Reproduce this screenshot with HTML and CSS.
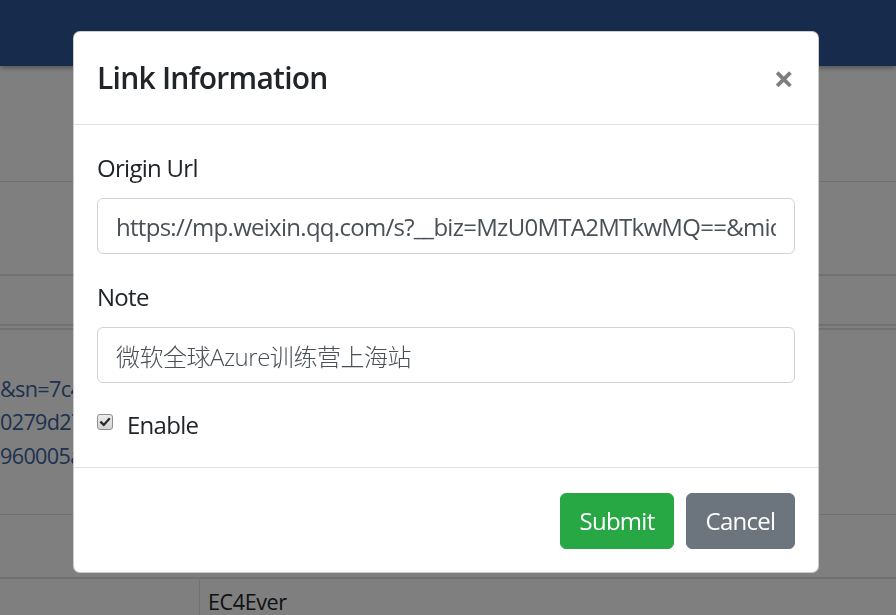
FILE: index.html
```html
<!DOCTYPE html>
<html lang="en">
<head>
<meta charset="utf-8">
<title>Link Information</title>
<link rel="stylesheet" href="styles.css">
</head>
<body>
<header class="navbar"></header>
<main class="page">
  <div class="row row-a"></div>
  <div class="row row-b"></div>
  <div class="row row-c"></div>
  <div class="row row-d">
    <div class="url-cell">
      <a class="link">&amp;sn=7c4b9e1a</a>
      <a class="link">0279d27f6c3a</a>
      <a class="link">960005a8e2d1</a>
    </div>
  </div>
  <div class="row row-e"></div>
  <div class="row row-f">
    <div class="cell cell-first"></div>
    <div class="cell cell-name">EC4Ever</div>
  </div>
</main>

<div class="backdrop"></div>

<div class="modal-wrap">
  <div class="modal" role="dialog">
    <div class="modal-header">
      <h5 class="modal-title">Link Information</h5>
      <button class="close" type="button" aria-label="Close">&times;</button>
    </div>
    <div class="modal-body">
      <div class="form-group group-url">
        <label class="form-label">Origin Url</label>
        <input class="form-control" type="text" value="https://mp.weixin.qq.com/s?__biz=MzU0MTA2MTkwMQ==&amp;mid=2247484020&amp;idx=1&amp;sn=7c4b9e1a0279d27f6c3a960005a8e2d1">
      </div>
      <div class="form-group group-note">
        <label class="form-label">Note</label>
        <input class="form-control note-input" type="text" value="微软全球Azure训练营上海站">
      </div>
      <div class="form-check">
        <span class="check-box" aria-hidden="true">
          <svg viewBox="0 0 16 16" width="14" height="14">
            <path d="M3.6 8.4 L6.6 11.3 L12.6 4.6" fill="none" stroke="#2b2b2b" stroke-width="2.6" stroke-linecap="square" stroke-linejoin="miter"/>
          </svg>
        </span>
        <span class="check-label">Enable</span>
      </div>
    </div>
    <div class="modal-footer">
      <button class="btn btn-success" type="button">Submit</button>
      <button class="btn btn-secondary" type="button">Cancel</button>
    </div>
  </div>
</div>
</body>
</html>
```

FILE: styles.css
```css
* {
  box-sizing: border-box;
}

html, body {
  margin: 0;
  padding: 0;
  height: 100%;
  overflow: hidden;
}

body {
  font-family: "Open Sans", "Noto Sans CJK SC", sans-serif;
  font-size: 24px;
  line-height: 36px;
  color: #212529;
  background: #ffffff;
  letter-spacing: -0.03em;
}

/* ---------- page underneath ---------- */
.navbar {
  height: 66px;
  background: #2f5699;
  box-shadow: 0 2px 5px rgba(0, 0, 0, 0.35);
  position: relative;
  z-index: 1;
}

.page {
  display: flex;
  flex-direction: column;
}

.row {
  width: 100%;
}

.row-a {
  height: 116px;
  border-bottom: 1px solid #dee2e6;
}

.row-b {
  height: 94px;
  border-bottom: 2px solid #dee2e6;
}

.row-c {
  height: 50px;
  border-bottom: 2px solid #dee2e6;
}

.row-d {
  margin-top: 2px;
  height: 187px;
  border-top: 2px solid #dee2e6;
  border-bottom: 1px solid #dee2e6;
  display: flex;
  align-items: center;
}

.url-cell {
  display: flex;
  flex-direction: column;
  font-size: 21.6px;
  line-height: 33.5px;
  letter-spacing: -0.03em;
}

.link {
  color: #3a64a0;
  text-decoration: none;
}

.row-e {
  height: 64px;
  border-bottom: 2px solid #dee2e6;
}

.row-f {
  display: flex;
  height: 60px;
}

.cell {
  font-size: 21.6px;
  line-height: 32px;
  letter-spacing: -0.02em;
}

.cell-first {
  width: 200px;
  border-right: 1px solid #dee2e6;
}

.cell-name {
  padding: 7px 0 0 8px;
  color: #212529;
}

/* ---------- overlay ---------- */
.backdrop {
  position: fixed;
  inset: 0;
  background: rgba(0, 0, 0, 0.5);
  z-index: 10;
}

.modal-wrap {
  position: fixed;
  inset: 0;
  z-index: 20;
  padding: 31px 0 0 73px;
}

.modal {
  width: 746px;
  background: #ffffff;
  border: 1px solid rgba(0, 0, 0, 0.2);
  border-radius: 7px;
  display: flex;
  flex-direction: column;
}

.modal-header {
  display: flex;
  align-items: flex-start;
  justify-content: space-between;
  padding: 28px 23px 27px 23px;
  border-bottom: 1px solid #dee2e6;
}

.modal-title {
  margin: 0;
  font-size: 30px;
  line-height: 36px;
  font-weight: 600;
  letter-spacing: -0.025em;
}

.close {
  border: 0;
  background: transparent;
  padding: 0 1px 0 0;
  margin: 1px 0 0 0;
  font-family: "Open Sans", sans-serif;
  font-size: 36px;
  font-weight: 700;
  line-height: 36px;
  color: #000;
  opacity: 0.5;
  text-shadow: 0 1px 0 #fff;
  letter-spacing: 0;
  cursor: pointer;
}

.modal-body {
  padding: 25px 23px 24px 23px;
}

.form-group {
  display: flex;
  flex-direction: column;
}

.group-url {
  margin-bottom: 25px;
}

.group-note {
  margin-bottom: 24px;
}

.form-label {
  margin-bottom: 12px;
}

.form-control {
  width: 698px;
  height: 56px;
  padding: 9px 18px;
  font-family: "Open Sans", "Noto Sans CJK SC", sans-serif;
  font-size: 24px;
  line-height: 36px;
  color: #495057;
  background: #fff;
  border: 1px solid #ced4da;
  border-radius: 6px;
  letter-spacing: -0.03em;
  outline: none;
}

.note-input {
  font-weight: 300;
  letter-spacing: -0.02em;
}

.form-check {
  display: flex;
  align-items: flex-start;
  gap: 14px;
  height: 36px;
}

.check-box {
  flex: none;
  width: 16px;
  height: 16px;
  margin-top: 7px;
  border: 1px solid #8f8f8f;
  border-radius: 3px;
  background: linear-gradient(#ececec, #d3d3d3);
  display: flex;
  align-items: center;
  justify-content: center;
}

.check-box svg {
  display: block;
}

.check-label {
  line-height: 36px;
}

.modal-footer {
  display: flex;
  justify-content: flex-end;
  align-items: center;
  gap: 12px;
  padding: 25px 23px 23px;
  border-top: 1px solid #dee2e6;
}

.btn {
  height: 56px;
  padding: 0;
  border: 1px solid transparent;
  border-radius: 6px;
  font-family: "Open Sans", sans-serif;
  font-size: 24px;
  line-height: 36px;
  color: #fff;
  letter-spacing: -0.03em;
  cursor: pointer;
}

.btn-success {
  width: 114px;
  background: #28a745;
  border-color: #28a745;
}

.btn-secondary {
  width: 109px;
  background: #6c757d;
  border-color: #6c757d;
}
```
